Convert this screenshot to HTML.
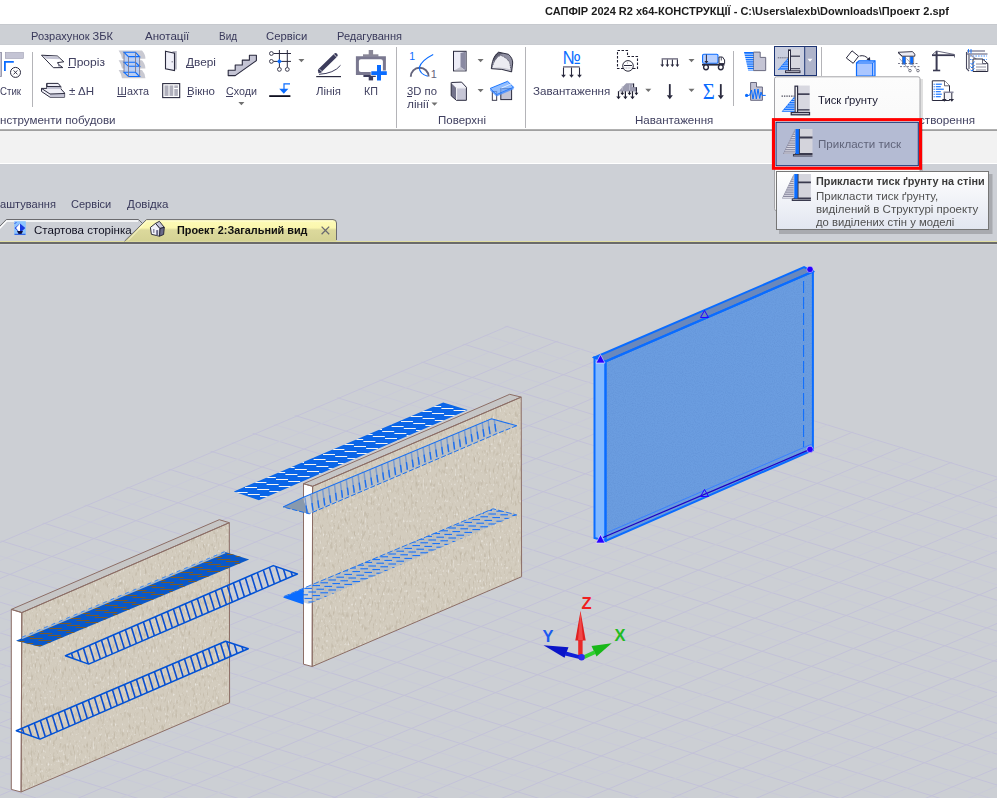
<!DOCTYPE html>
<html><head><meta charset="utf-8"><style>
html,body{margin:0;padding:0;width:997px;height:798px;overflow:hidden;background:#cccfd4}
body{position:relative;font-family:"Liberation Sans",sans-serif}
.t{position:absolute;white-space:pre;line-height:1;transform-origin:0 0}
.b{position:absolute}
svg{position:absolute;overflow:visible}
</style></head><body>
<div class="b" style="left:0;top:0;width:997px;height:24px;background:#fff"></div>
<div class="b" style="left:0;top:24px;width:997px;height:21px;background:#cdd0d5"></div>
<div class="b" style="left:0;top:24px;width:997px;height:1px;background:#c6c9ce"></div>
<div class="b" style="left:0;top:44px;width:997px;height:1px;background:#c9ccd1"></div>
<div class="b" style="left:0;top:45px;width:997px;height:84px;background:#fff"></div>
<div class="b" style="left:0;top:129px;width:997px;height:1px;background:#b0b0b0"></div>
<div class="b" style="left:0;top:130px;width:997px;height:1px;background:#a0a0a0"></div>
<div class="b" style="left:0;top:131px;width:997px;height:32px;background:#f2f2f2"></div>
<div class="b" style="left:0;top:163px;width:997px;height:1px;background:#ffffff"></div>
<div class="b" style="left:0;top:164px;width:997px;height:80px;background:#cdd0d6"></div>
<svg width="997" height="798" viewBox="0 0 997 798" style="left:0;top:0">
<defs>
<clipPath id="L1c"><polygon points="233.8,491.5 443.2,402.5 467.7,410.0 258.9,500.3"/></clipPath>
<clipPath id="vp"><rect x="0" y="244" width="997" height="554"/></clipPath>
<clipPath id="gridc"><polygon points="507.0,325.3 -1.0,541.5 -1.0,800.0 998.0,800.0 998.0,476.3"/></clipPath>
<filter id="noise" x="0" y="0" width="100%" height="100%">
<feTurbulence type="fractalNoise" baseFrequency="0.9" numOctaves="2" seed="3" result="n"/>
<feColorMatrix in="n" type="matrix" values="0 0 0 0 0  0 0 0 0 0  0 0 0 0 0  0 0 0 -1.2 0.75" result="a"/>
<feComposite in="SourceGraphic" in2="a" operator="in"/>
</filter>
<filter id="dark" x="0" y="0" width="100%" height="100%">
<feTurbulence type="fractalNoise" baseFrequency="0.45 0.16" numOctaves="2" seed="7" result="n"/>
<feColorMatrix in="n" type="matrix" values="0 0 0 0 0  0 0 0 0 0  0 0 0 0 0  3.0 0 0 0 -1.6" result="a"/>
<feComposite in="SourceGraphic" in2="a" operator="in"/>
</filter>
<filter id="light" x="0" y="0" width="100%" height="100%">
<feTurbulence type="fractalNoise" baseFrequency="0.6 0.3" numOctaves="1" seed="11" result="n"/>
<feColorMatrix in="n" type="matrix" values="0 0 0 0 0  0 0 0 0 0  0 0 0 0 0  4 0 0 0 -2.45" result="a"/>
<feComposite in="SourceGraphic" in2="a" operator="in"/>
</filter>
</defs>
<g clip-path="url(#vp)">
<g clip-path="url(#gridc)" fill="none">
<line x1="0" y1="170.9" x2="997" y2="477.0" stroke="#c3c2d8" stroke-width="1"/>
<line x1="0" y1="186.3" x2="997" y2="492.4" stroke="#c9cad8" stroke-width="1"/>
<line x1="0" y1="201.7" x2="997" y2="507.8" stroke="#c3c2d8" stroke-width="1"/>
<line x1="0" y1="217.1" x2="997" y2="523.2" stroke="#c9cad8" stroke-width="1"/>
<line x1="0" y1="232.5" x2="997" y2="538.6" stroke="#c3c2d8" stroke-width="1"/>
<line x1="0" y1="247.9" x2="997" y2="554.0" stroke="#c9cad8" stroke-width="1"/>
<line x1="0" y1="263.3" x2="997" y2="569.4" stroke="#c3c2d8" stroke-width="1"/>
<line x1="0" y1="278.7" x2="997" y2="584.8" stroke="#c9cad8" stroke-width="1"/>
<line x1="0" y1="294.1" x2="997" y2="600.2" stroke="#c3c2d8" stroke-width="1"/>
<line x1="0" y1="309.5" x2="997" y2="615.6" stroke="#c9cad8" stroke-width="1"/>
<line x1="0" y1="324.9" x2="997" y2="631.0" stroke="#c3c2d8" stroke-width="1"/>
<line x1="0" y1="340.3" x2="997" y2="646.4" stroke="#c9cad8" stroke-width="1"/>
<line x1="0" y1="355.7" x2="997" y2="661.8" stroke="#c3c2d8" stroke-width="1"/>
<line x1="0" y1="371.1" x2="997" y2="677.2" stroke="#c9cad8" stroke-width="1"/>
<line x1="0" y1="386.5" x2="997" y2="692.6" stroke="#c3c2d8" stroke-width="1"/>
<line x1="0" y1="401.9" x2="997" y2="708.0" stroke="#c9cad8" stroke-width="1"/>
<line x1="0" y1="417.3" x2="997" y2="723.4" stroke="#c3c2d8" stroke-width="1"/>
<line x1="0" y1="432.7" x2="997" y2="738.8" stroke="#c9cad8" stroke-width="1"/>
<line x1="0" y1="448.1" x2="997" y2="754.2" stroke="#c3c2d8" stroke-width="1"/>
<line x1="0" y1="463.5" x2="997" y2="769.6" stroke="#c9cad8" stroke-width="1"/>
<line x1="0" y1="478.9" x2="997" y2="785.0" stroke="#c3c2d8" stroke-width="1"/>
<line x1="0" y1="494.3" x2="997" y2="800.4" stroke="#c9cad8" stroke-width="1"/>
<line x1="0" y1="509.7" x2="997" y2="815.8" stroke="#c3c2d8" stroke-width="1"/>
<line x1="0" y1="525.1" x2="997" y2="831.2" stroke="#c9cad8" stroke-width="1"/>
<line x1="0" y1="540.5" x2="997" y2="846.6" stroke="#c3c2d8" stroke-width="1"/>
<line x1="0" y1="555.9" x2="997" y2="862.0" stroke="#c9cad8" stroke-width="1"/>
<line x1="0" y1="571.3" x2="997" y2="877.4" stroke="#c3c2d8" stroke-width="1"/>
<line x1="0" y1="586.7" x2="997" y2="892.8" stroke="#c9cad8" stroke-width="1"/>
<line x1="0" y1="602.1" x2="997" y2="908.2" stroke="#c3c2d8" stroke-width="1"/>
<line x1="0" y1="617.5" x2="997" y2="923.6" stroke="#c9cad8" stroke-width="1"/>
<line x1="0" y1="632.9" x2="997" y2="939.0" stroke="#c3c2d8" stroke-width="1"/>
<line x1="0" y1="648.3" x2="997" y2="954.4" stroke="#c9cad8" stroke-width="1"/>
<line x1="0" y1="663.7" x2="997" y2="969.8" stroke="#c3c2d8" stroke-width="1"/>
<line x1="0" y1="679.1" x2="997" y2="985.2" stroke="#c9cad8" stroke-width="1"/>
<line x1="0" y1="694.5" x2="997" y2="1000.6" stroke="#c3c2d8" stroke-width="1"/>
<line x1="0" y1="709.9" x2="997" y2="1016.0" stroke="#c9cad8" stroke-width="1"/>
<line x1="0" y1="725.3" x2="997" y2="1031.4" stroke="#c3c2d8" stroke-width="1"/>
<line x1="0" y1="740.7" x2="997" y2="1046.8" stroke="#c9cad8" stroke-width="1"/>
<line x1="0" y1="756.1" x2="997" y2="1062.2" stroke="#c3c2d8" stroke-width="1"/>
<line x1="0" y1="771.5" x2="997" y2="1077.6" stroke="#c9cad8" stroke-width="1"/>
<line x1="0" y1="786.9" x2="997" y2="1093.0" stroke="#c3c2d8" stroke-width="1"/>
<line x1="0" y1="802.3" x2="997" y2="1108.4" stroke="#c9cad8" stroke-width="1"/>
<line x1="0" y1="817.7" x2="997" y2="1123.8" stroke="#c3c2d8" stroke-width="1"/>
<line x1="0" y1="833.1" x2="997" y2="1139.2" stroke="#c9cad8" stroke-width="1"/>
<line x1="0" y1="848.5" x2="997" y2="1154.6" stroke="#c3c2d8" stroke-width="1"/>
<line x1="0" y1="863.9" x2="997" y2="1170.0" stroke="#c9cad8" stroke-width="1"/>
<line x1="0" y1="879.3" x2="997" y2="1185.4" stroke="#c3c2d8" stroke-width="1"/>
<line x1="0" y1="894.7" x2="997" y2="1200.8" stroke="#c9cad8" stroke-width="1"/>
<line x1="0" y1="910.1" x2="997" y2="1216.2" stroke="#c3c2d8" stroke-width="1"/>
<line x1="0" y1="925.5" x2="997" y2="1231.6" stroke="#c9cad8" stroke-width="1"/>
<line x1="0" y1="940.9" x2="997" y2="1247.0" stroke="#c3c2d8" stroke-width="1"/>
<line x1="0" y1="956.3" x2="997" y2="1262.4" stroke="#c9cad8" stroke-width="1"/>
<line x1="0" y1="971.7" x2="997" y2="1277.8" stroke="#c3c2d8" stroke-width="1"/>
<line x1="0" y1="987.1" x2="997" y2="1293.2" stroke="#c9cad8" stroke-width="1"/>
<line x1="0" y1="1002.5" x2="997" y2="1308.6" stroke="#c3c2d8" stroke-width="1"/>
<line x1="0" y1="1017.9" x2="997" y2="1324.0" stroke="#c9cad8" stroke-width="1"/>
<line x1="0" y1="1033.3" x2="997" y2="1339.4" stroke="#c3c2d8" stroke-width="1"/>
<line x1="0" y1="1048.7" x2="997" y2="1354.8" stroke="#c9cad8" stroke-width="1"/>
<line x1="0" y1="1064.1" x2="997" y2="1370.2" stroke="#c3c2d8" stroke-width="1"/>
<line x1="0" y1="1079.5" x2="997" y2="1385.6" stroke="#c9cad8" stroke-width="1"/>
<line x1="0" y1="542.5" x2="997" y2="117.8" stroke="#c3c2d8" stroke-width="1"/>
<line x1="0" y1="560.6" x2="997" y2="135.8" stroke="#c9cad8" stroke-width="1"/>
<line x1="0" y1="578.6" x2="997" y2="153.9" stroke="#c3c2d8" stroke-width="1"/>
<line x1="0" y1="596.7" x2="997" y2="172.0" stroke="#c9cad8" stroke-width="1"/>
<line x1="0" y1="614.7" x2="997" y2="190.0" stroke="#c3c2d8" stroke-width="1"/>
<line x1="0" y1="632.8" x2="997" y2="208.1" stroke="#c9cad8" stroke-width="1"/>
<line x1="0" y1="650.9" x2="997" y2="226.1" stroke="#c3c2d8" stroke-width="1"/>
<line x1="0" y1="668.9" x2="997" y2="244.2" stroke="#c9cad8" stroke-width="1"/>
<line x1="0" y1="687.0" x2="997" y2="262.3" stroke="#c3c2d8" stroke-width="1"/>
<line x1="0" y1="705.0" x2="997" y2="280.3" stroke="#c9cad8" stroke-width="1"/>
<line x1="0" y1="723.1" x2="997" y2="298.4" stroke="#c3c2d8" stroke-width="1"/>
<line x1="0" y1="741.2" x2="997" y2="316.4" stroke="#c9cad8" stroke-width="1"/>
<line x1="0" y1="759.2" x2="997" y2="334.5" stroke="#c3c2d8" stroke-width="1"/>
<line x1="0" y1="777.3" x2="997" y2="352.6" stroke="#c9cad8" stroke-width="1"/>
<line x1="0" y1="795.3" x2="997" y2="370.6" stroke="#c3c2d8" stroke-width="1"/>
<line x1="0" y1="813.4" x2="997" y2="388.7" stroke="#c9cad8" stroke-width="1"/>
<line x1="0" y1="831.5" x2="997" y2="406.7" stroke="#c3c2d8" stroke-width="1"/>
<line x1="0" y1="849.5" x2="997" y2="424.8" stroke="#c9cad8" stroke-width="1"/>
<line x1="0" y1="867.6" x2="997" y2="442.9" stroke="#c3c2d8" stroke-width="1"/>
<line x1="0" y1="885.6" x2="997" y2="460.9" stroke="#c9cad8" stroke-width="1"/>
<line x1="0" y1="903.7" x2="997" y2="479.0" stroke="#c3c2d8" stroke-width="1"/>
<line x1="0" y1="921.8" x2="997" y2="497.0" stroke="#c9cad8" stroke-width="1"/>
<line x1="0" y1="939.8" x2="997" y2="515.1" stroke="#c3c2d8" stroke-width="1"/>
<line x1="0" y1="957.9" x2="997" y2="533.2" stroke="#c9cad8" stroke-width="1"/>
<line x1="0" y1="975.9" x2="997" y2="551.2" stroke="#c3c2d8" stroke-width="1"/>
<line x1="0" y1="994.0" x2="997" y2="569.3" stroke="#c9cad8" stroke-width="1"/>
<line x1="0" y1="1012.1" x2="997" y2="587.3" stroke="#c3c2d8" stroke-width="1"/>
<line x1="0" y1="1030.1" x2="997" y2="605.4" stroke="#c9cad8" stroke-width="1"/>
<line x1="0" y1="1048.2" x2="997" y2="623.5" stroke="#c3c2d8" stroke-width="1"/>
<line x1="0" y1="1066.2" x2="997" y2="641.5" stroke="#c9cad8" stroke-width="1"/>
<line x1="0" y1="1084.3" x2="997" y2="659.6" stroke="#c3c2d8" stroke-width="1"/>
<line x1="0" y1="1102.4" x2="997" y2="677.6" stroke="#c9cad8" stroke-width="1"/>
<line x1="0" y1="1120.4" x2="997" y2="695.7" stroke="#c3c2d8" stroke-width="1"/>
<line x1="0" y1="1138.5" x2="997" y2="713.8" stroke="#c9cad8" stroke-width="1"/>
<line x1="0" y1="1156.5" x2="997" y2="731.8" stroke="#c3c2d8" stroke-width="1"/>
<line x1="0" y1="1174.6" x2="997" y2="749.9" stroke="#c9cad8" stroke-width="1"/>
<line x1="0" y1="1192.7" x2="997" y2="767.9" stroke="#c3c2d8" stroke-width="1"/>
<line x1="0" y1="1210.7" x2="997" y2="786.0" stroke="#c9cad8" stroke-width="1"/>
<line x1="0" y1="1228.8" x2="997" y2="804.1" stroke="#c3c2d8" stroke-width="1"/>
<line x1="0" y1="1246.8" x2="997" y2="822.1" stroke="#c9cad8" stroke-width="1"/>
<line x1="0" y1="1264.9" x2="997" y2="840.2" stroke="#c3c2d8" stroke-width="1"/>
<line x1="0" y1="1283.0" x2="997" y2="858.2" stroke="#c9cad8" stroke-width="1"/>
<line x1="0" y1="1301.0" x2="997" y2="876.3" stroke="#c3c2d8" stroke-width="1"/>
<line x1="0" y1="1319.1" x2="997" y2="894.4" stroke="#c9cad8" stroke-width="1"/>
<line x1="0" y1="1337.1" x2="997" y2="912.4" stroke="#c3c2d8" stroke-width="1"/>
<line x1="0" y1="1355.2" x2="997" y2="930.5" stroke="#c9cad8" stroke-width="1"/>
<line x1="0" y1="1373.3" x2="997" y2="948.5" stroke="#c3c2d8" stroke-width="1"/>
<line x1="0" y1="1391.3" x2="997" y2="966.6" stroke="#c9cad8" stroke-width="1"/>
<line x1="0" y1="1409.4" x2="997" y2="984.7" stroke="#c3c2d8" stroke-width="1"/>
<line x1="0" y1="1427.4" x2="997" y2="1002.7" stroke="#c9cad8" stroke-width="1"/>
<line x1="0" y1="1445.5" x2="997" y2="1020.8" stroke="#c3c2d8" stroke-width="1"/>
<line x1="0" y1="1463.6" x2="997" y2="1038.8" stroke="#c9cad8" stroke-width="1"/>
<line x1="0" y1="1481.6" x2="997" y2="1056.9" stroke="#c3c2d8" stroke-width="1"/>
<line x1="0" y1="1499.7" x2="997" y2="1075.0" stroke="#c9cad8" stroke-width="1"/>
<line x1="0" y1="1517.7" x2="997" y2="1093.0" stroke="#c3c2d8" stroke-width="1"/>
<line x1="0" y1="1535.8" x2="997" y2="1111.1" stroke="#c9cad8" stroke-width="1"/>
<line x1="0" y1="1553.9" x2="997" y2="1129.1" stroke="#c3c2d8" stroke-width="1"/>
<line x1="0" y1="1571.9" x2="997" y2="1147.2" stroke="#c9cad8" stroke-width="1"/>
<line x1="0" y1="1590.0" x2="997" y2="1165.3" stroke="#c3c2d8" stroke-width="1"/>
<line x1="0" y1="1608.0" x2="997" y2="1183.3" stroke="#c9cad8" stroke-width="1"/>
<line x1="0" y1="1626.1" x2="997" y2="1201.4" stroke="#c3c2d8" stroke-width="1"/>
<line x1="0" y1="1644.2" x2="997" y2="1219.4" stroke="#c9cad8" stroke-width="1"/>
<line x1="0" y1="1662.2" x2="997" y2="1237.5" stroke="#c3c2d8" stroke-width="1"/>
<line x1="0" y1="1680.3" x2="997" y2="1255.6" stroke="#c9cad8" stroke-width="1"/>
<line x1="0" y1="1698.3" x2="997" y2="1273.6" stroke="#c3c2d8" stroke-width="1"/>
<line x1="0" y1="1716.4" x2="997" y2="1291.7" stroke="#c9cad8" stroke-width="1"/>
<line x1="0" y1="1734.5" x2="997" y2="1309.7" stroke="#c3c2d8" stroke-width="1"/>
<line x1="0" y1="1752.5" x2="997" y2="1327.8" stroke="#c9cad8" stroke-width="1"/>
<line x1="0" y1="1770.6" x2="997" y2="1345.9" stroke="#c3c2d8" stroke-width="1"/>
<line x1="0" y1="1788.6" x2="997" y2="1363.9" stroke="#c9cad8" stroke-width="1"/>
</g>
<polygon points="233.8,491.5 443.2,402.5 467.7,410.0 258.9,500.3" fill="#0b66e8"/>
<path d="M223.4,490.5h12 M301.4,457.5h12 M292.0,462.5h12 M282.6,467.5h12 M273.2,472.5h12 M263.8,477.5h12 M254.4,482.5h12 M245.0,487.5h12 M235.6,492.5h12 M226.2,497.5h12 M379.4,424.5h12 M370.0,429.5h12 M360.6,434.5h12 M351.2,439.5h12 M341.8,444.5h12 M332.4,449.5h12 M323.0,454.5h12 M313.6,459.5h12 M304.2,464.5h12 M294.8,469.5h12 M285.4,474.5h12 M276.0,479.5h12 M266.6,484.5h12 M257.2,489.5h12 M247.8,494.5h12 M238.4,499.5h12 M229.0,504.5h12 M457.4,391.5h12 M448.0,396.5h12 M438.6,401.5h12 M429.2,406.5h12 M419.8,411.5h12 M410.4,416.5h12 M401.0,421.5h12 M391.6,426.5h12 M382.2,431.5h12 M372.8,436.5h12 M363.4,441.5h12 M354.0,446.5h12 M344.6,451.5h12 M335.2,456.5h12 M325.8,461.5h12 M316.4,466.5h12 M307.0,471.5h12 M297.6,476.5h12 M288.2,481.5h12 M278.8,486.5h12 M269.4,491.5h12 M260.0,496.5h12 M250.6,501.5h12 M241.2,506.5h12 M231.8,511.5h12 M222.4,516.5h12 M469.6,393.5h12 M460.2,398.5h12 M450.8,403.5h12 M441.4,408.5h12 M432.0,413.5h12 M422.6,418.5h12 M413.2,423.5h12 M403.8,428.5h12 M394.4,433.5h12 M385.0,438.5h12 M375.6,443.5h12 M366.2,448.5h12 M356.8,453.5h12 M347.4,458.5h12 M338.0,463.5h12 M328.6,468.5h12 M319.2,473.5h12 M309.8,478.5h12 M463.0,405.5h12 M453.6,410.5h12 M444.2,415.5h12 M434.8,420.5h12 M425.4,425.5h12 M416.0,430.5h12 M406.6,435.5h12 M397.2,440.5h12 M387.8,445.5h12" stroke="#f4f4f4" stroke-width="1" clip-path="url(#L1c)"/>
<polygon points="312.6,486.3 521.2,397.1 521.6,576.7 312.2,666.5" fill="#d3ccbe"/>
<polygon points="312.6,486.3 521.2,397.1 521.6,576.7 312.2,666.5" fill="#a89c86" filter="url(#dark)" opacity="0.45"/>
<polygon points="312.6,486.3 521.2,397.1 521.6,576.7 312.2,666.5" fill="#ffffff" filter="url(#light)" opacity="0.55"/>
<polygon points="303.5,483.7 312.6,486.3 312.2,666.5 303.5,664.2" fill="#ffffff"/>
<polygon points="303.5,483.7 312.6,486.3 521.2,397.1 509.7,394.3" fill="#c6c6c6"/>
<polygon points="312.6,486.3 521.2,397.1 521.6,576.7 312.2,666.5" fill="none" stroke="#8c6e66" stroke-width="1"/>
<polygon points="303.5,483.7 312.6,486.3 312.2,666.5 303.5,664.2" fill="none" stroke="#8c6e66" stroke-width="1"/>
<polygon points="303.5,483.7 312.6,486.3 521.2,397.1 509.7,394.3" fill="none" stroke="#8c6e66" stroke-width="1"/>
<polygon points="283.2,507.0 302.3,497.7 309.2,513.8" fill="#2a4a70"/>
<polygon points="302.3,497.7 491.5,418.8 516.8,425.7 498.4,433.0 309.2,513.8 283.2,507.0" fill="#b0bac6" fill-opacity="0.7"/>
<clipPath id="L2c"><polygon points="302.3,497.7 491.5,418.8 516.8,425.7 498.4,433.0 309.2,513.8 283.2,507.0"/></clipPath>
<path d="M305.0,497.5l2,16 M310.9,495.0l2,16 M316.8,492.4l2,16 M322.7,489.9l2,16 M328.6,487.3l2,16 M334.5,484.8l2,16 M340.4,482.2l2,16 M346.3,479.7l2,16 M352.2,477.1l2,16 M358.1,474.6l2,16 M364.0,472.0l2,16 M369.9,469.5l2,16 M375.8,466.9l2,16 M381.7,464.4l2,16 M387.6,461.9l2,16 M393.5,459.3l2,16 M399.4,456.8l2,16 M405.3,454.2l2,16 M411.2,451.7l2,16 M417.1,449.1l2,16 M423.0,446.6l2,16 M428.9,444.0l2,16 M434.8,441.5l2,16 M440.7,438.9l2,16 M446.6,436.4l2,16 M452.5,433.8l2,16 M458.4,431.3l2,16 M464.3,428.7l2,16 M470.2,426.2l2,16 M476.1,423.6l2,16 M482.0,421.1l2,16 M487.9,418.5l2,16 M493.8,416.0l2,16" stroke="#7c9cd0" stroke-width="1.5" fill="none" clip-path="url(#L2c)"/>
<path d="M306.1,505.5l1,7.5 M312.0,503.0l1,7.5 M317.9,500.4l1,7.5 M323.8,497.9l1,7.5 M329.7,495.3l1,7.5 M335.6,492.8l1,7.5 M341.5,490.2l1,7.5 M347.4,487.7l1,7.5 M353.3,485.1l1,7.5 M359.2,482.6l1,7.5 M365.1,480.0l1,7.5 M371.0,477.5l1,7.5 M376.9,474.9l1,7.5 M382.8,472.4l1,7.5 M388.7,469.9l1,7.5 M394.6,467.3l1,7.5 M400.5,464.8l1,7.5 M406.4,462.2l1,7.5 M412.3,459.7l1,7.5 M418.2,457.1l1,7.5 M424.1,454.6l1,7.5 M430.0,452.0l1,7.5 M435.9,449.5l1,7.5 M441.8,446.9l1,7.5 M447.7,444.4l1,7.5 M453.6,441.8l1,7.5 M459.5,439.3l1,7.5 M465.4,436.7l1,7.5 M471.3,434.2l1,7.5 M477.2,431.6l1,7.5 M483.1,429.1l1,7.5 M489.0,426.5l1,7.5 M494.9,424.0l1,7.5" stroke="#1a6ef0" stroke-width="1.3" fill="none" clip-path="url(#L2c)"/>
<polyline points="283.2,507.0 302.3,497.7 491.5,418.8 516.8,425.7" fill="none" stroke="#1a70f0" stroke-width="1.1"/>
<polyline points="516.8,425.7 498.4,433.0 309.2,513.8 283.2,507.0" fill="none" stroke="#1a70f0" stroke-width="1" stroke-dasharray="5,2"/>
<polygon points="283.8,596.5 493.0,508.8 517.0,515.0 308.9,604.0" fill="#aab4c2" fill-opacity="0.6"/>
<clipPath id="L3c"><polygon points="283.8,596.5 493.0,508.8 517.0,515.0 308.9,604.0"/></clipPath>
<path d="M512.4,515.6l7.6,0.0 M496.4,511.2l7.6,0.0 M500.4,514.8l7.6,0.0 M504.4,518.4l7.6,0.0 M484.4,510.4l7.6,0.0 M488.4,514.0l7.6,0.0 M492.4,517.6l7.6,0.0 M496.4,521.2l7.6,0.0 M476.4,513.2l7.6,0.0 M480.4,516.8l7.6,0.0 M484.4,520.4l7.6,0.0 M488.4,524.0l7.6,0.0 M472.4,519.6l7.6,0.0 M476.4,523.2l7.6,0.0 M480.4,526.8l7.6,0.0 M464.4,522.4l7.6,0.0 M468.4,526.0l7.6,0.0 M472.4,529.6l7.6,0.0 M456.4,525.2l7.6,0.0 M460.4,528.8l7.6,0.0 M464.4,532.4l7.6,0.0 M468.4,536.0l7.6,0.0 M448.4,528.0l7.6,0.0 M452.4,531.6l7.6,0.0 M456.4,535.2l7.6,0.0 M460.4,538.8l7.6,0.0 M440.4,530.8l7.6,0.0 M444.4,534.4l7.6,0.0 M448.4,538.0l7.6,0.0 M452.4,541.6l7.6,0.0 M432.4,533.6l7.6,0.0 M436.4,537.2l7.6,0.0 M440.4,540.8l7.6,0.0 M444.4,544.4l7.6,0.0 M424.4,536.4l7.6,0.0 M428.4,540.0l7.6,0.0 M432.4,543.6l7.6,0.0 M436.4,547.2l7.6,0.0 M416.4,539.2l7.6,0.0 M420.4,542.8l7.6,0.0 M424.4,546.4l7.6,0.0 M428.4,550.0l7.6,0.0 M408.4,542.0l7.6,0.0 M412.4,545.6l7.6,0.0 M416.4,549.2l7.6,0.0 M420.4,552.8l7.6,0.0 M404.4,548.4l7.6,0.0 M408.4,552.0l7.6,0.0 M412.4,555.6l7.6,0.0 M396.4,551.2l7.6,0.0 M400.4,554.8l7.6,0.0 M404.4,558.4l7.6,0.0 M388.4,554.0l7.6,0.0 M392.4,557.6l7.6,0.0 M396.4,561.2l7.6,0.0 M400.4,564.8l7.6,0.0 M380.4,556.8l7.6,0.0 M384.4,560.4l7.6,0.0 M388.4,564.0l7.6,0.0 M392.4,567.6l7.6,0.0 M372.4,559.6l7.6,0.0 M376.4,563.2l7.6,0.0 M380.4,566.8l7.6,0.0 M384.4,570.4l7.6,0.0 M364.4,562.4l7.6,0.0 M368.4,566.0l7.6,0.0 M372.4,569.6l7.6,0.0 M376.4,573.2l7.6,0.0 M356.4,565.2l7.6,0.0 M360.4,568.8l7.6,0.0 M364.4,572.4l7.6,0.0 M368.4,576.0l7.6,0.0 M348.4,568.0l7.6,0.0 M352.4,571.6l7.6,0.0 M356.4,575.2l7.6,0.0 M360.4,578.8l7.6,0.0 M340.4,570.8l7.6,0.0 M344.4,574.4l7.6,0.0 M348.4,578.0l7.6,0.0 M352.4,581.6l7.6,0.0 M332.4,573.6l7.6,0.0 M336.4,577.2l7.6,0.0 M340.4,580.8l7.6,0.0 M344.4,584.4l7.6,0.0 M328.4,580.0l7.6,0.0 M332.4,583.6l7.6,0.0 M336.4,587.2l7.6,0.0 M340.4,590.8l7.6,0.0 M320.4,582.8l7.6,0.0 M324.4,586.4l7.6,0.0 M328.4,590.0l7.6,0.0 M332.4,593.6l7.6,0.0 M312.4,585.6l7.6,0.0 M316.4,589.2l7.6,0.0 M320.4,592.8l7.6,0.0 M324.4,596.4l7.6,0.0 M304.4,588.4l7.6,0.0 M308.4,592.0l7.6,0.0 M312.4,595.6l7.6,0.0 M316.4,599.2l7.6,0.0 M296.4,591.2l7.6,0.0 M300.4,594.8l7.6,0.0 M304.4,598.4l7.6,0.0 M308.4,602.0l7.6,0.0 M288.4,594.0l7.6,0.0 M292.4,597.6l7.6,0.0 M296.4,601.2l7.6,0.0 M280.4,596.8l7.6,0.0" stroke="#0a6cff" stroke-width="1.0" fill="none" clip-path="url(#L3c)"/>
<polygon points="283.0,597.5 303.5,588.5 303.5,604.5" fill="#0a6cff"/>
<polyline points="283.8,596.5 493.0,508.8 517.0,515.0" fill="none" stroke="#1a70f0" stroke-width="0.9" stroke-dasharray="6,2"/>
<polygon points="21.8,612.6 229.3,522.7 229.6,702.7 21.1,792.0" fill="#d3ccbe"/>
<polygon points="21.8,612.6 229.3,522.7 229.6,702.7 21.1,792.0" fill="#a89c86" filter="url(#dark)" opacity="0.45"/>
<polygon points="21.8,612.6 229.3,522.7 229.6,702.7 21.1,792.0" fill="#ffffff" filter="url(#light)" opacity="0.55"/>
<polygon points="11.3,609.4 21.8,612.6 21.1,792.0 11.3,789.4" fill="#ffffff"/>
<polygon points="11.3,609.4 21.8,612.6 229.3,522.7 219.3,519.7" fill="#c6c6c6"/>
<polygon points="21.8,612.6 229.3,522.7 229.6,702.7 21.1,792.0" fill="none" stroke="#8c6e66" stroke-width="1"/>
<polygon points="11.3,609.4 21.8,612.6 21.1,792.0 11.3,789.4" fill="none" stroke="#8c6e66" stroke-width="1"/>
<polygon points="11.3,609.4 21.8,612.6 229.3,522.7 219.3,519.7" fill="none" stroke="#8c6e66" stroke-width="1"/>
<polygon points="16.0,640.8 225.2,552.0 249.2,559.6 40.0,646.8" fill="#0a58c8"/>
<clipPath id="L4c"><polygon points="16.0,640.8 225.2,552.0 249.2,559.6 40.0,646.8"/></clipPath>
<path d="M235.6,556.5l13,0.0 M234.8,563.5l13,0.0 M226.9,554.5l13,0.0 M226.1,561.5l13,0.0 M225.3,568.5l13,0.0 M217.4,559.5l13,0.0 M216.6,566.5l13,0.0 M215.8,573.5l13,0.0 M208.7,557.5l13,0.0 M207.9,564.5l13,0.0 M207.1,571.5l13,0.0 M199.2,562.5l13,0.0 M198.4,569.5l13,0.0 M197.6,576.5l13,0.0 M189.7,567.5l13,0.0 M188.9,574.5l13,0.0 M188.1,581.5l13,0.0 M180.2,572.5l13,0.0 M179.4,579.5l13,0.0 M178.6,586.5l13,0.0 M171.5,570.5l13,0.0 M170.7,577.5l13,0.0 M169.9,584.5l13,0.0 M169.1,591.5l13,0.0 M162.0,575.5l13,0.0 M161.2,582.5l13,0.0 M160.4,589.5l13,0.0 M159.6,596.5l13,0.0 M152.5,580.5l13,0.0 M151.7,587.5l13,0.0 M150.9,594.5l13,0.0 M143.0,585.5l13,0.0 M142.2,592.5l13,0.0 M141.4,599.5l13,0.0 M133.5,590.5l13,0.0 M132.7,597.5l13,0.0 M131.9,604.5l13,0.0 M124.0,595.5l13,0.0 M123.2,602.5l13,0.0 M122.4,609.5l13,0.0 M114.5,600.5l13,0.0 M113.7,607.5l13,0.0 M112.9,614.5l13,0.0 M105.8,598.5l13,0.0 M105.0,605.5l13,0.0 M104.2,612.5l13,0.0 M103.4,619.5l13,0.0 M96.3,603.5l13,0.0 M95.5,610.5l13,0.0 M94.7,617.5l13,0.0 M93.9,624.5l13,0.0 M86.8,608.5l13,0.0 M86.0,615.5l13,0.0 M85.2,622.5l13,0.0 M77.3,613.5l13,0.0 M76.5,620.5l13,0.0 M75.7,627.5l13,0.0 M67.8,618.5l13,0.0 M67.0,625.5l13,0.0 M66.2,632.5l13,0.0 M58.3,623.5l13,0.0 M57.5,630.5l13,0.0 M56.7,637.5l13,0.0 M48.8,628.5l13,0.0 M48.0,635.5l13,0.0 M47.2,642.5l13,0.0 M40.1,626.5l13,0.0 M39.3,633.5l13,0.0 M38.5,640.5l13,0.0 M30.6,631.5l13,0.0 M29.8,638.5l13,0.0 M29.0,645.5l13,0.0 M21.1,636.5l13,0.0 M20.3,643.5l13,0.0 M11.6,641.5l13,0.0" stroke="#7a5a28" stroke-width="1" fill="none" clip-path="url(#L4c)"/>
<line x1="22.0" y1="638.3" x2="225.2" y2="552.5" stroke="#a8b8c8" stroke-width="1.6"/>
<line x1="22.0" y1="637.2" x2="225.2" y2="551.4" stroke="#1a78ff" stroke-width="0.8" stroke-dasharray="4,4"/>
<polygon points="65.4,655.7 273.3,565.6 297.4,574.0 88.7,664.1" fill="none" stroke="#0052d6" stroke-width="1.5" stroke-linejoin="round"/>
<clipPath id="c655"><polygon points="65.4,655.7 273.3,565.6 297.4,574.0 88.7,664.1"/></clipPath>
<path d="M71.4,653.1l5.0,16.3 M77.4,650.5l5.0,16.3 M83.4,647.9l5.0,16.3 M89.4,645.3l5.0,16.3 M95.4,642.7l5.0,16.3 M101.4,640.1l5.0,16.3 M107.4,637.6l5.0,16.3 M113.4,635.0l5.0,16.3 M119.4,632.4l5.0,16.3 M125.4,629.8l5.0,16.3 M131.4,627.2l5.0,16.3 M137.4,624.6l5.0,16.3 M143.4,622.0l5.0,16.3 M149.4,619.4l5.0,16.3 M155.4,616.8l5.0,16.3 M161.4,614.2l5.0,16.3 M167.4,611.6l5.0,16.3 M173.4,609.0l5.0,16.3 M179.4,606.5l5.0,16.3 M185.4,603.9l5.0,16.3 M191.4,601.3l5.0,16.3 M197.4,598.7l5.0,16.3 M203.4,596.1l5.0,16.3 M209.4,593.5l5.0,16.3 M215.4,590.9l5.0,16.3 M221.4,588.3l5.0,16.3 M227.4,585.7l5.0,16.3 M233.4,583.1l5.0,16.3 M239.4,580.5l5.0,16.3 M245.4,577.9l5.0,16.3 M251.4,575.3l5.0,16.3 M257.4,572.8l5.0,16.3 M263.4,570.2l5.0,16.3 M269.4,567.6l5.0,16.3 M275.4,565.0l5.0,16.3 M281.4,562.4l5.0,16.3 M287.4,559.8l5.0,16.3" stroke="#0a4ed0" stroke-width="1.6" fill="none" clip-path="url(#c655)"/>
<polygon points="16.3,730.8 225.6,641.3 248.2,648.8 40.1,739.1" fill="none" stroke="#0052d6" stroke-width="1.5" stroke-linejoin="round"/>
<clipPath id="c730"><polygon points="16.3,730.8 225.6,641.3 248.2,648.8 40.1,739.1"/></clipPath>
<path d="M22.3,728.2l5.0,16.4 M28.3,725.6l5.0,16.4 M34.3,723.0l5.0,16.4 M40.3,720.4l5.0,16.4 M46.3,717.8l5.0,16.4 M52.3,715.2l5.0,16.4 M58.3,712.7l5.0,16.4 M64.3,710.1l5.0,16.4 M70.3,707.5l5.0,16.4 M76.3,704.9l5.0,16.4 M82.3,702.3l5.0,16.4 M88.3,699.7l5.0,16.4 M94.3,697.1l5.0,16.4 M100.3,694.5l5.0,16.4 M106.3,691.9l5.0,16.4 M112.3,689.3l5.0,16.4 M118.3,686.7l5.0,16.4 M124.3,684.1l5.0,16.4 M130.3,681.6l5.0,16.4 M136.3,679.0l5.0,16.4 M142.3,676.4l5.0,16.4 M148.3,673.8l5.0,16.4 M154.3,671.2l5.0,16.4 M160.3,668.6l5.0,16.4 M166.3,666.0l5.0,16.4 M172.3,663.4l5.0,16.4 M178.3,660.8l5.0,16.4 M184.3,658.2l5.0,16.4 M190.3,655.6l5.0,16.4 M196.3,653.0l5.0,16.4 M202.3,650.4l5.0,16.4 M208.3,647.9l5.0,16.4 M214.3,645.3l5.0,16.4 M220.3,642.7l5.0,16.4 M226.3,640.1l5.0,16.4 M232.3,637.5l5.0,16.4 M238.3,634.9l5.0,16.4" stroke="#0a4ed0" stroke-width="1.6" fill="none" clip-path="url(#c730)"/>
<polygon points="605.5,361.5 812.9,271.6 812.9,450.0 605.5,541.0" fill="#6b9de0"/>
<polygon points="605.5,361.5 812.9,271.6 812.9,450.0 605.5,541.0" fill="#4a78c0" filter="url(#noise)" opacity="0.35"/>
<polygon points="594.5,357.5 605.5,361.5 605.5,541.0 594.5,538.0" fill="#80b8ff"/>
<polygon points="594.5,357.5 605.5,361.5 812.9,271.6 804.1,267.2" fill="#6a88bc"/>
<polygon points="605.5,361.5 812.9,271.6 812.9,450.0 605.5,541.0" fill="none" stroke="#0a6cff" stroke-width="2"/>
<polygon points="594.5,357.5 605.5,361.5 605.5,541.0 594.5,538.0" fill="none" stroke="#0a6cff" stroke-width="2"/>
<polygon points="594.5,357.5 605.5,361.5 812.9,271.6 804.1,267.2" fill="none" stroke="#0a6cff" stroke-width="2"/>
<line x1="603" y1="537.5" x2="810" y2="449.4" stroke="#2000c0" stroke-width="1.2"/>
<line x1="606" y1="533" x2="812" y2="444" stroke="#3a80ff" stroke-width="1"/>
<line x1="803.6" y1="281" x2="803.6" y2="447" stroke="#0a6cff" stroke-width="1" stroke-dasharray="12,4"/>
<polygon points="600.5,354.5 596,363 605,363" fill="#2800ff" stroke="#f0e8ff" stroke-width="0.6"/>
<polygon points="600.5,534.5 596,543 605,543" fill="#2800ff" stroke="#f0e8ff" stroke-width="0.6"/>
<circle cx="810" cy="269.4" r="3.2" fill="#2800ff" stroke="#f0e8ff" stroke-width="0.5"/>
<circle cx="810" cy="449.4" r="3.2" fill="#2800ff" stroke="#f0e8ff" stroke-width="0.5"/>
<polygon points="704.5,310.5 700.5,317.5 708.5,317.5" fill="none" stroke="#2800ff" stroke-width="1"/>
<polygon points="704.5,489.5 700.5,496.5 708.5,496.5" fill="none" stroke="#2800ff" stroke-width="1"/>
<g>
<polygon points="580.5,611 575.3,640.5 585.7,640.5" fill="#e02020"/>
<polygon points="580.5,611 578,640.5 583,640.5" fill="#f04848"/>
<rect x="578.2" y="640" width="4.4" height="17" fill="#e82828"/>
<polygon points="543.5,645.2 568.5,647.2 564.5,657.8" fill="#0a14c8"/>
<polygon points="566,651.5 580.5,655.5 579.5,659 565,655.5" fill="#1020d8"/>
<polygon points="611.7,643.2 591.5,646 596.5,656.5" fill="#18b818"/>
<polygon points="594,650.5 583,655.5 584.5,659 595.5,654" fill="#30d030"/>
<circle cx="581.6" cy="657.2" r="3.2" fill="#2a2af0"/>
<text x="581.5" y="609.2" font-family="Liberation Sans" font-weight="700" font-size="16.5" fill="#f02020">Z</text>
<text x="542.5" y="642.2" font-family="Liberation Sans" font-weight="700" font-size="16.5" fill="#1a5af0">Y</text>
<text x="614.5" y="641.2" font-family="Liberation Sans" font-weight="700" font-size="16.5" fill="#22bb22">X</text>
</g>
</g></svg>
<svg width="997" height="798" viewBox="0 0 997 798" style="left:0;top:0">
<line x1="32.5" y1="52" x2="32.5" y2="107" stroke="#b4b4b8" stroke-width="1"/>
<line x1="396.5" y1="47" x2="396.5" y2="128" stroke="#b4b4b8" stroke-width="1"/>
<line x1="525.5" y1="47" x2="525.5" y2="128" stroke="#b4b4b8" stroke-width="1"/>
<line x1="733.5" y1="51" x2="733.5" y2="106" stroke="#b4b4b8" stroke-width="1"/>
<line x1="821.5" y1="47" x2="821.5" y2="76" stroke="#b4b4b8" stroke-width="1"/>
<rect x="-2" y="52.5" width="3.5" height="24" fill="#c4c4d4" stroke="#8a8aa0" stroke-width="0.8"/>
<rect x="5.3" y="52.6" width="18" height="5.8" fill="#c4c4d4" stroke="#9a9ab0" stroke-width="0.6"/>
<path d="M4.9,71 V61.9 H13.8" fill="none" stroke="#0a6cff" stroke-width="1.8"/>
<circle cx="15.5" cy="72.4" r="5" fill="#fff" stroke="#2a2a3e" stroke-width="1"/>
<path d="M13.6,70.4 l3.8,4 M17.4,70.4 l-3.8,4" stroke="#2a2a3e" stroke-width="0.9"/>
<path d="M41.5,55.2 L57.4,56 L63.8,61.8 L57.5,62.6 L58.8,64.7 L62.8,67.6 L53.4,67.7 Z" fill="#fff" stroke="#2a2a3e" stroke-width="1"/>
<path d="M43.5,56 L57,56.6 L60.2,59.2 L46.5,58.8 Z" fill="#c4c4d4"/>
<path d="M57.6,63 L60.5,66.3 L58.5,66.5 Z" fill="#6a6a80"/>
<path d="M41.5,88.4 L46.8,88.4 L46.8,83.4 L58.2,83.4 L60.8,86.6 L60.8,88.8 L64.6,93 L64.6,97.2 L50,97.2 L41.5,91.5 Z" fill="#f0f0f8" stroke="#2a2a3e" stroke-width="1"/>
<path d="M47.3,86.8 L60.6,86.8 L60.6,89 L47.3,89 Z" fill="#c4c4d4"/>
<path d="M50,94 L64.4,94 L64.4,97 L50,97 Z" fill="#c4c4d4"/>
<path d="M41.5,88.4 L50,94 L64.6,93.5 M46.8,83.4 L46.8,86.5 L60.8,86.6" fill="none" stroke="#2a2a3e" stroke-width="1"/>
<path d="M118.6,50.4 L142,50.4 Q145.5,54.4 145.4,58.7 L122,58.7 Q121.5,54.4 118.6,50.4 Z" fill="#cacad2"/>
<path d="M118.6,60.2 L142,60.2 Q145.5,64.2 145.4,68.5 L122,68.5 Q121.5,64.2 118.6,60.2 Z" fill="#cacad2"/>
<path d="M118.6,70.0 L142,70.0 Q145.5,74.0 145.4,78.3 L122,78.3 Q121.5,74.0 118.6,70.0 Z" fill="#cacad2"/>
<path d="M124,52.3 L135.5,52.3 L139.6,56.6 L139.6,76.5 L128.5,76.5 L124,72.3 Z" fill="#b8cdf4" fill-opacity="0.9"/>
<path d="M124,52.3 L135.5,52.3 L139.6,56.6 L128.5,56.6 Z M124,62.3 L135.5,62.3 L139.6,66.3 L128.5,66.3 Z M124,72.3 L135.5,72.3 L139.6,76.5 L128.5,76.5 Z" fill="none" stroke="#0a6cff" stroke-width="1.1"/>
<path d="M124,52.3 V72.3 M128.5,56.6 V76.5 M139.6,56.6 V76.5 M135.5,52.3 V72.3" stroke="#7a7a92" stroke-width="0.9" fill="none"/>
<rect x="172.5" y="51" width="4.3" height="18.5" fill="#b8b8c4"/>
<path d="M165.5,51.3 L174.5,53.2 L174.5,70.5 L165.5,68.8 Z" fill="#f0f0f8" stroke="#2a2a3e" stroke-width="1.1"/>
<line x1="172.2" y1="61" x2="172.2" y2="62.5" stroke="#2a2a3e" stroke-width="0.6"/>
<rect x="162.7" y="83.6" width="17" height="14" fill="#fff" stroke="#2a2a3e" stroke-width="1.1"/>
<rect x="164.5" y="85.4" width="4" height="10.5" fill="#b0b0bc"/>
<rect x="169.5" y="85.4" width="3.8" height="10.5" fill="#b0b0bc"/>
<rect x="174.3" y="85.4" width="3.6" height="2.6" fill="#b0b0bc"/>
<rect x="174.3" y="89" width="3.6" height="6.9" fill="#b0b0bc"/>
<path d="M228.2,75.6 V70.3 H235.2 V65 H242.3 V60.1 H249.4 V55.3 H256.4 V60.6 L235.2,75.6 Z" fill="#c4c4d4" stroke="#2a2a3e" stroke-width="1.1" stroke-linejoin="round"/>
<polygon points="238.4,102.0 244.4,102.0 241.4,105.3" fill="#707070"/>
<path d="M273.5,53.5 H291 M273.5,61.4 H291 M279.4,50 V67.2 M287.3,50 V67.2" stroke="#2a2a3e" stroke-width="1"/>
<circle cx="271.4" cy="53.5" r="1.9" fill="#fff" stroke="#2a2a3e" stroke-width="0.9"/>
<circle cx="271.4" cy="61.4" r="1.9" fill="#fff" stroke="#2a2a3e" stroke-width="0.9"/>
<circle cx="279.4" cy="69.4" r="1.9" fill="#fff" stroke="#2a2a3e" stroke-width="0.9"/>
<circle cx="287.3" cy="69.4" r="1.9" fill="#fff" stroke="#2a2a3e" stroke-width="0.9"/>
<polygon points="279.4,59 281.8,61.4 279.4,63.8 277,61.4" fill="#0a6cff"/>
<polygon points="298.4,58.9 304.4,58.9 301.4,62.199999999999996" fill="#707070"/>
<rect x="269.2" y="95.2" width="21.2" height="1.8" fill="#101020"/>
<path d="M290,83.8 H284 V89" fill="none" stroke="#0a6cff" stroke-width="1.2"/>
<polygon points="279.2,88.8 288.4,88.8 283.8,93.8" fill="#0a6cff"/>
<line x1="320" y1="70.5" x2="335.6" y2="55.2" stroke="#3c3c5c" stroke-width="4.2" stroke-linecap="round"/>
<polygon points="318.2,73.2 319.2,68.6 322.6,72" fill="#3c3c5c"/>
<line x1="319.6" y1="69.2" x2="322.3" y2="71.9" stroke="#fff" stroke-width="0.8"/>
<line x1="333.2" y1="53.6" x2="336.8" y2="57.2" stroke="#fff" stroke-width="0.8"/>
<path d="M319,74.3 Q334,73.5 340.5,65.3" fill="none" stroke="#3c3c5c" stroke-width="1"/>
<line x1="316.2" y1="76.6" x2="341" y2="76.6" stroke="#2a2a40" stroke-width="1.2"/>
<rect x="368.7" y="50" width="4.4" height="5" fill="#8a8898"/>
<rect x="363" y="54.3" width="15.4" height="2.4" fill="#8a8898"/>
<path d="M355.9,56.2 H385.9 V75.1 H355.9 Z M361,59.2 Q358.9,59.2 358.9,61.3 V70 Q358.9,72.1 361,72.1 H380.8 Q382.9,72.1 382.9,70 V61.3 Q382.9,59.2 380.8,59.2 Z" fill="#7a7890" fill-rule="evenodd"/>
<rect x="363.4" y="75" width="12.4" height="2" fill="#3c3c5c"/>
<rect x="368.7" y="76.8" width="4.4" height="3.6" fill="#3c3c5c"/>
<path d="M377,65 h4 v6.2 h5.8 v3.9 h-5.8 v5.3 h-4 v-5.3 h-5.7 v-3.9 h5.7 z" fill="#0a6cff" stroke="#fff" stroke-width="1.2" paint-order="stroke"/>
<text x="409.2" y="59.9" font-family="Liberation Sans" font-size="10.5" fill="#0a6cff">1</text>
<path d="M410.8,76.7 A8.8,8.8 0 0 1 428.6,76.5" fill="none" stroke="#64647c" stroke-width="1.9"/>
<path d="M433.2,54.4 Q421,60.5 419.3,67.5 Q419.5,74 427.7,76.2" fill="none" stroke="#0a6cff" stroke-width="1.1"/>
<text x="430.8" y="78" font-family="Liberation Sans" font-size="11" fill="#64647c">1</text>
<polygon points="431.5,102.5 437.5,102.5 434.5,105.8" fill="#707070"/>
<rect x="453.5" y="51.3" width="12.6" height="19.6" fill="#ececf6" stroke="#2a2a3e" stroke-width="1"/>
<path d="M460.5,53 L465.5,51.8 L465.5,70.4 L460.5,67 Z" fill="#8a8aa2"/>
<path d="M454,70.4 L460.5,67 L465.5,70.4 Z" fill="#c0c0cc"/>
<polygon points="477.6,58.9 483.6,58.9 480.6,62.199999999999996" fill="#707070"/>
<path d="M491.3,68.7 C492,62 493.5,56 498.6,52.2 L508.5,54.3 C511.5,57 512.8,60 512.7,63 L511.6,71.9 Q502,68.5 491.3,68.7 Z" fill="#9090a2"/>
<path d="M493,60 C494.5,55.5 496.5,53 498.6,52.2 L503.5,53.6 C499,54.5 496,57.5 494.2,61.5 Z" fill="#5e5e70"/>
<path d="M491.9,68.5 C493.5,62 496.5,57 500.7,55.4 C505,57 508,59.5 509.6,62.5 L510.9,70.9 Q502,68.2 491.9,68.5 Z" fill="#ececf2"/>
<path d="M492.5,68 Q502,66.5 510.6,69.5 L510.6,70.6 Q502,68.2 492.5,68.6 Z" fill="#c8c8d2"/>
<path d="M491.3,68.7 C492,62 493.5,56 498.6,52.2 L508.5,54.3 C511.5,57 512.8,60 512.7,63 L511.6,71.9 Q502,68.5 491.3,68.7 Z" fill="none" stroke="#1e1e30" stroke-width="0.9" stroke-linejoin="round"/>
<path d="M491.9,68.5 C493.5,62 496.5,57 500.7,55.4 C505,57 508,59.5 509.6,62.5 L511.3,71.5" fill="none" stroke="#2a2a3e" stroke-width="0.6" stroke-dasharray="1,0.8"/>
<polygon points="451.2,82.5 461.6,82.1 466.4,87.3 456.4,87.7" fill="#f2f2fa"/>
<polygon points="451.2,82.5 456.4,87.7 456.4,100.3 451.2,95.8" fill="#74748c"/>
<polygon points="456.4,87.7 466.4,87.3 466.4,100.3 456.4,100.3" fill="#c6c6d6"/>
<polygon points="451.2,82.5 461.6,82.1 466.4,87.3 466.4,100.3 456.4,100.3 451.2,95.8" fill="none" stroke="#2a2a3e" stroke-width="1" stroke-linejoin="round"/>
<path d="M451.6,83 L456.6,87.9 H466 M456.6,88 V100" stroke="#fff" stroke-width="0.8" fill="none"/>
<polygon points="477.6,89.0 483.6,89.0 480.6,92.3" fill="#707070"/>
<rect x="492.3" y="91.6" width="4.4" height="8.7" fill="#fff" stroke="#2a2a3e" stroke-width="0.9"/>
<rect x="500.8" y="88.6" width="10.8" height="11" fill="#c4c4d4" stroke="#2a2a3e" stroke-width="1"/>
<polygon points="490.2,88.4 507.6,81.3 513.6,87.3 496.5,94.7" fill="#6ea8ff" fill-opacity="0.75" stroke="#0a6cff" stroke-width="0.9"/>
<polygon points="490.2,88.4 496.5,94.7 496.5,96.6 490.2,90.6" fill="#4a90ff" fill-opacity="0.8"/>
<polygon points="496.5,94.7 513.6,87.3 513.6,89.2 496.5,96.6" fill="#4a90ff" fill-opacity="0.8"/>
<path d="M501.5,88 L511.5,83.8" stroke="#e8f0ff" stroke-width="0.9"/>
<text x="562.5" y="64.3" font-family="Liberation Sans" font-size="19" fill="#0a6cff" transform="translate(562.5,64.3) scale(0.9,1) translate(-562.5,-64.3)">№</text>
<rect x="563" y="66" width="16.6" height="1.7" fill="#8a8898"/>
<line x1="563.5" y1="67.5" x2="563.5" y2="75.3" stroke="#2a2a3e" stroke-width="1.1"/><polygon points="561.2,74.8 565.8,74.8 563.5,77.8" fill="#2a2a3e"/>
<line x1="571.5" y1="67.5" x2="571.5" y2="75.3" stroke="#2a2a3e" stroke-width="1.1"/><polygon points="569.2,74.8 573.8,74.8 571.5,77.8" fill="#2a2a3e"/>
<line x1="579.5" y1="67.5" x2="579.5" y2="75.3" stroke="#2a2a3e" stroke-width="1.1"/><polygon points="577.2,74.8 581.8,74.8 579.5,77.8" fill="#2a2a3e"/>
<path d="M617.5,50.5 H627.5 V56.5 H637.5 V68.5 H617.5 Z" fill="none" stroke="#1e1e30" stroke-width="1.1" stroke-dasharray="2.5,1.5"/>
<circle cx="628" cy="65.9" r="5.3" fill="#fff" stroke="#2a2a3a" stroke-width="1"/>
<path d="M624,65.5 H632" stroke="#2a2a3e" stroke-width="1"/>
<path d="M624.5,68 H631.5" stroke="#9a9aaa" stroke-width="0.8" stroke-dasharray="1,0.6"/>
<path d="M627.5,62.4 v1.2" stroke="#6a6a7a" stroke-width="0.6"/>
<rect x="661.6" y="58" width="16.4" height="1.7" fill="#8a8898"/>
<line x1="662.3" y1="59.5" x2="662.3" y2="64.9" stroke="#2a2a3e" stroke-width="1.1"/><polygon points="660.4,64.4 664.1999999999999,64.4 662.3,67" fill="#2a2a3e"/>
<line x1="667.4" y1="59.5" x2="667.4" y2="64.9" stroke="#2a2a3e" stroke-width="1.1"/><polygon points="665.5,64.4 669.3,64.4 667.4,67" fill="#2a2a3e"/>
<line x1="672.4" y1="59.5" x2="672.4" y2="64.9" stroke="#2a2a3e" stroke-width="1.1"/><polygon points="670.5,64.4 674.3,64.4 672.4,67" fill="#2a2a3e"/>
<line x1="677.4" y1="59.5" x2="677.4" y2="64.9" stroke="#2a2a3e" stroke-width="1.1"/><polygon points="675.5,64.4 679.3,64.4 677.4,67" fill="#2a2a3e"/>
<polygon points="688.5,58.9 694.5,58.9 691.5,62.199999999999996" fill="#707070"/>
<rect x="702.6" y="54.2" width="15.4" height="9" rx="1.2" fill="#b8d0ff" stroke="#0a6cff" stroke-width="1.1"/>
<path d="M719,57 H722.5 L724.6,60 V63.6 H719 Z" fill="#fff" stroke="#2a2a3e" stroke-width="1"/>
<line x1="721.3" y1="57.2" x2="721.3" y2="60.5" stroke="#2a2a3e" stroke-width="0.8"/>
<rect x="702" y="63.8" width="22.5" height="1.8" fill="#2a2a3e"/>
<line x1="706.4" y1="54.5" x2="706.4" y2="61.4" stroke="#2a2a3e" stroke-width="1"/><polygon points="704.4,60.9 708.4,60.9 706.4,63.4" fill="#2a2a3e"/>
<circle cx="706" cy="67.3" r="2.4" fill="#fff" stroke="#2a2a3e" stroke-width="1.4"/>
<circle cx="720.8" cy="67.3" r="2.4" fill="#fff" stroke="#2a2a3e" stroke-width="1.4"/>
<path d="M618.3,91.4 L626.2,83.2 H633.6 V87.1 H636.8 V91.4 Z" fill="#9c9cb0"/>
<polygon points="631.6,86.5 633.4,84.6 633.4,86.5" fill="#fff"/>
<path d="M622.3,86 V90 M629.5,84.5 V90 M636.4,88 V90" stroke="#c0c0d0" stroke-width="0.8"/>
<path d="M633.6,83.5 V87.3" stroke="#1e1e30" stroke-width="1.1"/>
<line x1="618.5" y1="91.2" x2="618.5" y2="96.9" stroke="#1e1e30" stroke-width="1.2"/><polygon points="616.3,96.4 620.7,96.4 618.5,99.2" fill="#1e1e30"/>
<line x1="625.4" y1="91.2" x2="625.4" y2="96.9" stroke="#1e1e30" stroke-width="1.2"/><polygon points="623.1999999999999,96.4 627.6,96.4 625.4,99.2" fill="#1e1e30"/>
<line x1="632.5" y1="91.2" x2="632.5" y2="96.9" stroke="#1e1e30" stroke-width="1.2"/><polygon points="630.3,96.4 634.7,96.4 632.5,99.2" fill="#1e1e30"/>
<line x1="622.3" y1="91.2" x2="622.3" y2="93.3" stroke="#1e1e30" stroke-width="1.1"/><polygon points="620.3,92.8 624.3,92.8 622.3,95.2" fill="#1e1e30"/>
<line x1="629.5" y1="91.2" x2="629.5" y2="93.3" stroke="#1e1e30" stroke-width="1.1"/><polygon points="627.5,92.8 631.5,92.8 629.5,95.2" fill="#1e1e30"/>
<line x1="636.4" y1="91.2" x2="636.4" y2="93.3" stroke="#1e1e30" stroke-width="1.1"/><polygon points="634.4,92.8 638.4,92.8 636.4,95.2" fill="#1e1e30"/>
<path d="M636.4,87.3 V91.3" stroke="#1e1e30" stroke-width="1.1"/>
<polygon points="645.3,88.7 651.3,88.7 648.3,92.0" fill="#707070"/>
<line x1="669.8" y1="84.1" x2="669.8" y2="95.7" stroke="#2a2a3e" stroke-width="1.8"/><polygon points="666.8,95.2 672.8,95.2 669.8,99.2" fill="#2a2a3e"/>
<polygon points="688.5,88.7 694.5,88.7 691.5,92.0" fill="#707070"/>
<text x="702.8" y="99.3" font-family="Liberation Serif" font-size="23" fill="#0a6cff" transform="translate(702.8,99.3) scale(0.9,1) translate(-702.8,-99.3)">Σ</text>
<line x1="720.8" y1="84.1" x2="720.8" y2="95.7" stroke="#2a2a3e" stroke-width="1.8"/><polygon points="717.8,95.2 723.8,95.2 720.8,99.2" fill="#2a2a3e"/>
<path d="M753.5,52.1 H760.2 V57.4 H765.7 V70.6 H753.5 Z" fill="#c4c4d4" stroke="#6a6a80" stroke-width="1"/>
<path d="M744,52.1 H753.3 V70.6 H748.2 Z" fill="#0a6cff"/>
<line x1="744" y1="54.20" x2="753.3" y2="54.20" stroke="#fff" stroke-width="0.75"/>
<line x1="744" y1="56.40" x2="753.3" y2="56.40" stroke="#fff" stroke-width="0.75"/>
<line x1="744" y1="58.60" x2="753.3" y2="58.60" stroke="#fff" stroke-width="0.75"/>
<line x1="744" y1="60.80" x2="753.3" y2="60.80" stroke="#fff" stroke-width="0.75"/>
<line x1="744" y1="63.00" x2="753.3" y2="63.00" stroke="#fff" stroke-width="0.75"/>
<line x1="744" y1="65.20" x2="753.3" y2="65.20" stroke="#fff" stroke-width="0.75"/>
<line x1="744" y1="67.40" x2="753.3" y2="67.40" stroke="#fff" stroke-width="0.75"/>
<line x1="744" y1="69.60" x2="753.3" y2="69.60" stroke="#fff" stroke-width="0.75"/>
<path d="M750.6,82.5 H756.5 V87 H762.4 V100.3 H750.6 Z" fill="#c4c4d4" stroke="#6a6a80" stroke-width="1"/>
<path d="M746.3,95.4 H749.5 L751.5,90 L753,99 L754.8,89 L756.3,99 L758,89 L759.7,98.5 L761,92 L762,95.4 H765.7" fill="none" stroke="#0a6cff" stroke-width="1"/>
<circle cx="746.6" cy="95.4" r="1.6" fill="#0a6cff"/>
<rect x="774.5" y="46.5" width="42" height="29" fill="#c9cedf" stroke="#1c3473" stroke-width="1"/>
<rect x="805" y="47" width="11" height="28" fill="#aeb4cb"/>
<line x1="804.7" y1="46.5" x2="804.7" y2="75.5" stroke="#1c3473" stroke-width="1"/>
<polygon points="807.5,58.8 812.5,58.8 810,61.8" fill="#fff"/>
<g transform="translate(778,49.2) scale(1.0)"><rect x="12.4" y="0.2" width="9.8" height="23.6" fill="#d8d8e0"/><rect x="10.5" y="0.7" width="2" height="21" fill="#fff" stroke="#2e2e44" stroke-width="1"/><path d="M12.5,7 H22" stroke="#2e2e44" stroke-width="1.2" fill="none"/><path d="M12.5,19.5 H22" stroke="#2e2e44" stroke-width="1" fill="none"/><rect x="7.5" y="21.6" width="14.5" height="1.8" fill="#d8d8e0" stroke="#2e2e44" stroke-width="1"/><path d="M-0.2,8.6 H10" stroke="#4a4a5a" stroke-width="0.9" stroke-dasharray="1.1,0.8"/><polygon points="-0.2,20.9 10,8.8 10,20.9" fill="#0a6cff"/><line x1="8.58" y1="11.20" x2="10" y2="11.20" stroke="#fff" stroke-width="0.55"/><line x1="7.11" y1="12.95" x2="10" y2="12.95" stroke="#fff" stroke-width="0.55"/><line x1="5.64" y1="14.70" x2="10" y2="14.70" stroke="#fff" stroke-width="0.55"/><line x1="4.17" y1="16.45" x2="10" y2="16.45" stroke="#fff" stroke-width="0.55"/><line x1="2.70" y1="18.20" x2="10" y2="18.20" stroke="#fff" stroke-width="0.55"/><line x1="1.23" y1="19.95" x2="10" y2="19.95" stroke="#fff" stroke-width="0.55"/></g>
<polygon points="852,50.8 858.6,56.2 853.2,63.3 846.3,58" fill="#fff" stroke="#2a2a3e" stroke-width="1"/>
<path d="M859.5,56 Q865,54.5 869,59.5" fill="none" stroke="#2a2a3e" stroke-width="1"/>
<polygon points="866.5,59.5 870.3,61.2 870,57" fill="#2a2a3e"/>
<path d="M856.5,63 L859,60.8 L875,60.8 L875,76 L856.5,76 Z" fill="#aac6ff" stroke="#0a6cff" stroke-width="1.2"/>
<path d="M856.5,63 H872.5 L875,60.8 M872.5,63 V76" fill="none" stroke="#0a6cff" stroke-width="0.9"/>
<path d="M902.5,56.5 V64.5 M905.5,56.5 V64.5 M910,56.5 V64.5 M913.6,56.5 V64.5" stroke="#3a3a50" stroke-width="0.6"/>
<rect x="902.6" y="56.3" width="2.8" height="8.2" fill="#0a6cff"/>
<rect x="910.2" y="56.3" width="2.8" height="8.2" fill="#0a6cff"/>
<path d="M898,52.3 L912.5,51.6 L914.8,54.2 L914.8,56.2 L902,56.2 Z" fill="#ececf4" stroke="#2a2a3e" stroke-width="0.9" stroke-linejoin="round"/>
<path d="M898,52.5 L902,56.2" stroke="#2a2a3e" stroke-width="0.9"/>
<path d="M898,63.5 H917.5 M900,66.6 H920" stroke="#5a5a70" stroke-width="0.8" stroke-dasharray="2,1.5"/>
<path d="M899.5,58.5 L909.5,70 M906.5,58.5 L917.3,70" stroke="#6a6a80" stroke-width="0.6"/>
<circle cx="910" cy="70.6" r="1.3" fill="#fff" stroke="#2a2a3e" stroke-width="0.6"/>
<circle cx="918" cy="70.6" r="1.3" fill="#fff" stroke="#2a2a3e" stroke-width="0.6"/>
<path d="M936.6,51 V70" stroke="#3a3a52" stroke-width="2"/>
<path d="M933,70.5 H940.2" stroke="#3a3a52" stroke-width="1.6"/>
<path d="M932,55.2 H954.7" stroke="#3a3a52" stroke-width="1.8"/>
<path d="M932,55 L936.6,51 L954.5,54.5 M954.5,55 V57.5" stroke="#5a5a70" stroke-width="0.9" fill="none"/>
<path d="M967,51 H985 M967,54 H987.5" stroke="#8a8aa0" stroke-width="1.6"/>
<path d="M966.5,52 V68.5 L969,71 M969,53.5 V69" stroke="#4a4a60" stroke-width="1.1" fill="none"/>
<path d="M970,56 H987 M970,59.5 H987" stroke="#0a6cff" stroke-width="0.8" stroke-dasharray="1.5,1.2"/>
<path d="M968.5,49 V53.5 M971,49 V53.5" stroke="#0a6cff" stroke-width="0.9"/>
<path d="M967.5,52.5 L976.5,59.5" stroke="#9a9ab0" stroke-width="1.4"/>
<path d="M973,59 H982.5 L987.8,63.5 V71.5 H973 Z" fill="#fff" stroke="#2a2a3e" stroke-width="1"/>
<path d="M982.5,59 V63.5 H987.8" fill="none" stroke="#2a2a3e" stroke-width="0.7"/>
<path d="M970.5,63 L972,64.5 L974.5,61.5 M970.5,66.5 L972,68 L974.5,65 M970.5,70 L972,71 L974.5,68.5" stroke="#0a6cff" stroke-width="0.9" fill="none"/>
<path d="M976,64 H986 M976,67 H986 M976,70 H986" stroke="#5a5a70" stroke-width="0.7"/>
<path d="M932.3,80.8 H944.5 L949.5,85.8 V100.5 H932.3 Z" fill="#fff" stroke="#2a2a3e" stroke-width="1"/>
<path d="M944.5,80.8 V85.8 H949.5" fill="#fff" stroke="#2a2a3e" stroke-width="0.7"/>
<line x1="933.6" y1="84.2" x2="934.8" y2="84.2" stroke="#0a6cff" stroke-width="1.1"/>
<line x1="935.8" y1="84.2" x2="941.8" y2="84.2" stroke="#0a6cff" stroke-width="1.1"/>
<line x1="933.6" y1="86.7" x2="934.8" y2="86.7" stroke="#0a6cff" stroke-width="1.1"/>
<line x1="935.8" y1="86.7" x2="940.8" y2="86.7" stroke="#0a6cff" stroke-width="1.1"/>
<line x1="933.6" y1="89.2" x2="934.8" y2="89.2" stroke="#0a6cff" stroke-width="1.1"/>
<line x1="935.8" y1="89.2" x2="943.8" y2="89.2" stroke="#0a6cff" stroke-width="1.1"/>
<line x1="933.6" y1="91.7" x2="934.8" y2="91.7" stroke="#0a6cff" stroke-width="1.1"/>
<line x1="935.8" y1="91.7" x2="940.8" y2="91.7" stroke="#0a6cff" stroke-width="1.1"/>
<line x1="933.6" y1="94.2" x2="934.8" y2="94.2" stroke="#0a6cff" stroke-width="1.1"/>
<line x1="935.8" y1="94.2" x2="941.8" y2="94.2" stroke="#0a6cff" stroke-width="1.1"/>
<line x1="933.6" y1="96.7" x2="934.8" y2="96.7" stroke="#0a6cff" stroke-width="1.1"/>
<line x1="935.8" y1="96.7" x2="940.8" y2="96.7" stroke="#0a6cff" stroke-width="1.1"/>
<rect x="943.5" y="91.5" width="10" height="1.6" fill="#8a8aa0"/>
<path d="M944.3,93 V100 M951.8,93 V100" stroke="#2a2a3e" stroke-width="1"/>
<rect x="945" y="93" width="6" height="6" fill="#f4f4f8"/>
<polygon points="942,99 946.6,99 944.3,101.8" fill="#2a2a3e"/>
<polygon points="949.5,99 954.1,99 951.8,101.8" fill="#2a2a3e"/>
</svg>
<div class="t" style="left:545.00px;top:6.43px;font-size:11.3px;font-weight:700;color:#1b1b1b;transform:scaleX(0.9751)">САПФІР 2024 R2 x64-КОНСТРУКЦІЇ - C:\Users\alexb\Downloads\Проект 2.spf</div>
<div class="t" style="left:31.20px;top:31.09px;font-size:11px;font-weight:400;color:#38385a;transform:scaleX(1.0065)">Розрахунок ЗБК</div>
<div class="t" style="left:144.50px;top:31.09px;font-size:11px;font-weight:400;color:#38385a;transform:scaleX(1.0493)">Анотації</div>
<div class="t" style="left:218.80px;top:31.09px;font-size:11px;font-weight:400;color:#38385a;transform:scaleX(0.9093)">Вид</div>
<div class="t" style="left:265.80px;top:31.09px;font-size:11px;font-weight:400;color:#38385a;transform:scaleX(1.0268)">Сервіси</div>
<div class="t" style="left:337.00px;top:31.09px;font-size:11px;font-weight:400;color:#38385a;transform:scaleX(1.0041)">Редагування</div>
<div class="t" style="left:-0.50px;top:85.69px;font-size:11px;font-weight:400;color:#404060;transform:scaleX(0.8767)">Стик</div>
<div class="t" style="left:68.00px;top:56.69px;font-size:11px;font-weight:400;color:#404060;transform:scaleX(1.0963)">Проріз</div><div style="position:absolute;left:68px;top:66.8px;width:7px;height:1px;background:#404060"></div>
<div class="t" style="left:69.00px;top:85.69px;font-size:11px;font-weight:400;color:#404060;transform:scaleX(1.0512)">± ΔН</div>
<div class="t" style="left:116.50px;top:85.69px;font-size:11px;font-weight:400;color:#404060;transform:scaleX(0.9813)">Шахта</div><div style="position:absolute;left:116.5px;top:95.8px;width:9.5px;height:1px;background:#404060"></div>
<div class="t" style="left:186.00px;top:57.29px;font-size:11px;font-weight:400;color:#404060;transform:scaleX(1.0768)">Двері</div><div style="position:absolute;left:186px;top:67.4px;width:8px;height:1px;background:#404060"></div>
<div class="t" style="left:186.50px;top:85.69px;font-size:11px;font-weight:400;color:#404060;transform:scaleX(1.0449)">Вікно</div><div style="position:absolute;left:186.5px;top:95.8px;width:5.5px;height:1px;background:#404060"></div>
<div class="t" style="left:226.00px;top:85.69px;font-size:11px;font-weight:400;color:#404060;transform:scaleX(0.9759)">Сходи</div><div style="position:absolute;left:226px;top:95.8px;width:7px;height:1px;background:#404060"></div>
<div class="t" style="left:316.00px;top:85.69px;font-size:11px;font-weight:400;color:#404060;transform:scaleX(1.0356)">Лінія</div>
<div class="t" style="left:364.00px;top:85.69px;font-size:11px;font-weight:400;color:#404060;transform:scaleX(0.9771)">КП</div>
<div class="t" style="left:407.00px;top:85.69px;font-size:11px;font-weight:400;color:#404060;transform:scaleX(1.0273)">3D по</div><div style="position:absolute;left:407px;top:95.8px;width:5px;height:1px;background:#404060"></div>
<div class="t" style="left:407.00px;top:98.69px;font-size:11px;font-weight:400;color:#404060;transform:scaleX(1.0765)">лінії</div>
<div class="t" style="left:532.70px;top:85.69px;font-size:11px;font-weight:400;color:#404060;transform:scaleX(1.0546)">Завантаження</div>
<div class="t" style="left:-0.50px;top:115.29px;font-size:11px;font-weight:400;color:#404060;transform:scaleX(1.0521)">нструменти побудови</div>
<div class="t" style="left:438.00px;top:115.29px;font-size:11px;font-weight:400;color:#404060;transform:scaleX(1.0463)">Поверхні</div>
<div class="t" style="left:635.40px;top:115.29px;font-size:11px;font-weight:400;color:#404060;transform:scaleX(1.0497)">Навантаження</div>
<div class="t" style="left:850.00px;top:115.29px;font-size:11px;font-weight:400;color:#404060;transform:scaleX(1.0614)">Інструменти створення</div>
<div class="t" style="left:-0.50px;top:199.09px;font-size:11px;font-weight:400;color:#38385a;transform:scaleX(1.0079)">аштування</div>
<div class="t" style="left:71.30px;top:199.09px;font-size:11px;font-weight:400;color:#38385a;transform:scaleX(1.0044)">Сервіси</div>
<div class="t" style="left:127.00px;top:199.09px;font-size:11px;font-weight:400;color:#38385a;transform:scaleX(1.0486)">Довідка</div>
<svg width="997" height="798" viewBox="0 0 997 798" style="left:0;top:0">
<defs>
<linearGradient id="tabg" x1="0" y1="0" x2="0" y2="1">
<stop offset="0" stop-color="#fdfbb8"/><stop offset="0.38" stop-color="#fbf7ae"/><stop offset="0.48" stop-color="#dcd99c"/><stop offset="1" stop-color="#d4d294"/>
</linearGradient>
<linearGradient id="ttg" x1="0" y1="0" x2="0" y2="1">
<stop offset="0" stop-color="#ffffff"/><stop offset="1" stop-color="#e2e6f0"/>
</linearGradient>
<linearGradient id="mg" x1="0" y1="0" x2="0" y2="1">
<stop offset="0" stop-color="#fcfcfc"/><stop offset="1" stop-color="#f4f4f4"/>
</linearGradient>
</defs>
<rect x="0" y="241" width="997" height="1" fill="#e0dea0"/>
<rect x="0" y="242" width="997" height="2" fill="#6a6a6a"/>
<rect x="0" y="244" width="997" height="1" fill="#d4d7db"/>
<!-- inactive tab -->
<path d="M0,241 L0,226 L6.5,219.5 L143,219.5 L146,223 L125,241 Z" fill="#cdd0d6"/>
<path d="M-1,227 L6.3,219.5 H138.5 L143,224" fill="none" stroke="#6a6a6e" stroke-width="1"/>
<path d="M-0.5,228.5 L6.8,221 H138" fill="none" stroke="#fff" stroke-width="1.3"/>
<!-- active tab -->
<path d="M124.5,241.2 L146.5,219.6 H333 Q336.5,219.6 336.5,223 V241.2 Z" fill="url(#tabg)"/>
<path d="M124.5,241.2 L146.5,219.6 H333 Q336.5,219.6 336.5,223 V240" fill="none" stroke="#6a6a70" stroke-width="1"/>
<path d="M128,240.5 L147.2,221 H333" fill="none" stroke="#fffde0" stroke-width="0.8"/>
<!-- close x -->
<path d="M321.6,226.6 l7.6,7.6 M329.2,226.6 l-7.6,7.6" stroke="#6a6a70" stroke-width="1.3"/>
<!-- home icon (active tab) -->
<g stroke="#1e1e30" stroke-width="0.9" stroke-linejoin="round">
<polygon points="155.5,223.4 159.4,221.3 164.3,227.4 159.8,228.5" fill="#c8c8dc"/>
<polygon points="159.8,228.5 164.3,227.4 163.6,234.5 159.5,236.2" fill="#6a6a88"/>
<polygon points="155.5,223.4 150.4,227.4 151.4,234.3 159.5,236.2 159.8,228.5" fill="#f2f2fa"/>
</g>
<rect x="153.2" y="229" width="1.2" height="3.9" fill="#7a7a94"/>
<rect x="156.2" y="230.1" width="2" height="5.5" fill="#6a6a88"/>
<!-- start page icon -->
<g>
<rect x="14.2" y="221.2" width="11.6" height="13.4" fill="#8cc4ff"/>
<polygon points="20,223.5 25.3,228 20,233 14.6,228" fill="#1a3ae0"/>
<polygon points="20,223.5 20,233 16,228" fill="#ffffff"/>
<polygon points="17,231 23,231 21.5,234 18.5,234" fill="#101040"/>
<rect x="14.5" y="233.8" width="11" height="1" fill="#1a50e0"/>
<path d="M14.5,224 l2,-2" stroke="#1a3ae0" stroke-width="0.8"/>
</g>


<rect x="777" y="79" width="146" height="133" fill="#000" fill-opacity="0.12"/>
<rect x="774.5" y="76.8" width="145.5" height="134" rx="2" fill="url(#mg)" stroke="#a4a4a8" stroke-width="1"/>
<rect x="771.9" y="118.1" width="150.2" height="51.7" fill="#ff0000"/>
<rect x="775" y="121.2" width="144" height="45.5" fill="#ffffff"/>
<rect x="776" y="122.3" width="142.3" height="43.4" fill="#b4bbd3" stroke="#0d2a70" stroke-width="1"/>

<g transform="translate(781.8,85.3) scale(1.26)"><rect x="12.4" y="0.2" width="9.8" height="23.6" fill="#d8d8e0"/><rect x="10.5" y="0.7" width="2" height="21" fill="#fff" stroke="#2e2e44" stroke-width="1"/><path d="M12.5,7 H22" stroke="#2e2e44" stroke-width="1.2" fill="none"/><path d="M12.5,19.5 H22" stroke="#2e2e44" stroke-width="1" fill="none"/><rect x="7.5" y="21.6" width="14.5" height="1.8" fill="#d8d8e0" stroke="#2e2e44" stroke-width="1"/><path d="M-0.2,8.6 H10" stroke="#4a4a5a" stroke-width="0.9" stroke-dasharray="1.1,0.8"/><polygon points="-0.2,20.9 10,8.8 10,20.9" fill="#0a6cff"/><line x1="8.58" y1="11.20" x2="10" y2="11.20" stroke="#fff" stroke-width="0.55"/><line x1="7.11" y1="12.95" x2="10" y2="12.95" stroke="#fff" stroke-width="0.55"/><line x1="5.64" y1="14.70" x2="10" y2="14.70" stroke="#fff" stroke-width="0.55"/><line x1="4.17" y1="16.45" x2="10" y2="16.45" stroke="#fff" stroke-width="0.55"/><line x1="2.70" y1="18.20" x2="10" y2="18.20" stroke="#fff" stroke-width="0.55"/><line x1="1.23" y1="19.95" x2="10" y2="19.95" stroke="#fff" stroke-width="0.55"/></g>
<g transform="translate(783,129)">
<rect x="16.5" y="0" width="13" height="26.5" fill="#d4d4dc"/>
<path d="M16,0 V25 M16,8.5 H29.5 M10.5,25 H29.5" stroke="#3a3a4e" stroke-width="1.8" fill="none"/>
<path d="M10.5,25 V27 H29.5" stroke="#3a3a4e" stroke-width="1.1" fill="none"/>
<polygon points="0,25 12,0 12,25" fill="#8a8aa0"/>
<rect x="12.5" y="0" width="3.4" height="25" fill="#0a6cff"/>
<line x1="11.64" y1="2.00" x2="12" y2="2.00" stroke="#e8e8f0" stroke-width="0.9"/><line x1="10.58" y1="4.20" x2="12" y2="4.20" stroke="#e8e8f0" stroke-width="0.9"/><line x1="9.53" y1="6.40" x2="12" y2="6.40" stroke="#e8e8f0" stroke-width="0.9"/><line x1="8.47" y1="8.60" x2="12" y2="8.60" stroke="#e8e8f0" stroke-width="0.9"/><line x1="7.42" y1="10.80" x2="12" y2="10.80" stroke="#e8e8f0" stroke-width="0.9"/><line x1="6.36" y1="13.00" x2="12" y2="13.00" stroke="#e8e8f0" stroke-width="0.9"/><line x1="5.30" y1="15.20" x2="12" y2="15.20" stroke="#e8e8f0" stroke-width="0.9"/><line x1="4.25" y1="17.40" x2="12" y2="17.40" stroke="#e8e8f0" stroke-width="0.9"/><line x1="3.19" y1="19.60" x2="12" y2="19.60" stroke="#e8e8f0" stroke-width="0.9"/><line x1="2.14" y1="21.80" x2="12" y2="21.80" stroke="#e8e8f0" stroke-width="0.9"/><line x1="1.08" y1="24.00" x2="12" y2="24.00" stroke="#e8e8f0" stroke-width="0.9"/>
</g>

<rect x="779" y="174" width="213.5" height="60" fill="#000" fill-opacity="0.18"/>
<rect x="776.5" y="171.5" width="212" height="58" fill="url(#ttg)" stroke="#767676" stroke-width="1"/>
<g transform="translate(782,174) scale(0.98)">
<rect x="16.5" y="0" width="13" height="26.5" fill="#d4d4dc"/>
<path d="M16,0 V25 M16,8.5 H29.5 M10.5,25 H29.5" stroke="#3a3a4e" stroke-width="1.8" fill="none"/>
<path d="M10.5,25 V27 H29.5" stroke="#3a3a4e" stroke-width="1.1" fill="none"/>
<polygon points="0,25 12,0 12,25" fill="#8a8aa0"/>
<rect x="12.5" y="0" width="3.4" height="25" fill="#0a6cff"/>
<line x1="11.64" y1="2.00" x2="12" y2="2.00" stroke="#e8e8f0" stroke-width="0.9"/><line x1="10.58" y1="4.20" x2="12" y2="4.20" stroke="#e8e8f0" stroke-width="0.9"/><line x1="9.53" y1="6.40" x2="12" y2="6.40" stroke="#e8e8f0" stroke-width="0.9"/><line x1="8.47" y1="8.60" x2="12" y2="8.60" stroke="#e8e8f0" stroke-width="0.9"/><line x1="7.42" y1="10.80" x2="12" y2="10.80" stroke="#e8e8f0" stroke-width="0.9"/><line x1="6.36" y1="13.00" x2="12" y2="13.00" stroke="#e8e8f0" stroke-width="0.9"/><line x1="5.30" y1="15.20" x2="12" y2="15.20" stroke="#e8e8f0" stroke-width="0.9"/><line x1="4.25" y1="17.40" x2="12" y2="17.40" stroke="#e8e8f0" stroke-width="0.9"/><line x1="3.19" y1="19.60" x2="12" y2="19.60" stroke="#e8e8f0" stroke-width="0.9"/><line x1="2.14" y1="21.80" x2="12" y2="21.80" stroke="#e8e8f0" stroke-width="0.9"/><line x1="1.08" y1="24.00" x2="12" y2="24.00" stroke="#e8e8f0" stroke-width="0.9"/>
</g>
</svg>
<div class="t" style="left:34.00px;top:225.49px;font-size:11px;font-weight:400;color:#101020;transform:scaleX(1.0481)">Стартова сторінка</div>
<div class="t" style="left:177.30px;top:225.49px;font-size:11px;font-weight:700;color:#101010;transform:scaleX(0.9857)">Проект 2:Загальний вид</div>
<div class="t" style="left:818.00px;top:95.29px;font-size:11px;font-weight:400;color:#1a1a30;transform:scaleX(1.0254)">Тиск ґрунту</div>
<div class="t" style="left:818.00px;top:139.29px;font-size:11px;font-weight:400;color:#60647a;transform:scaleX(1.0523)">Прикласти тиск</div>
<div class="t" style="left:816.20px;top:175.89px;font-size:11px;font-weight:700;color:#3a3a3a;transform:scaleX(0.9851)">Прикласти тиск ґрунту на стіни</div>
<div class="t" style="left:816.20px;top:190.99px;font-size:11px;font-weight:400;color:#505050;transform:scaleX(1.0468)">Прикласти тиск ґрунту,</div>
<div class="t" style="left:816.20px;top:203.89px;font-size:11px;font-weight:400;color:#505050;transform:scaleX(1.0458)">виділений в Структурі проекту</div>
<div class="t" style="left:816.20px;top:216.69px;font-size:11px;font-weight:400;color:#505050;transform:scaleX(1.0252)">до виділених стін у моделі</div>
</body></html>
